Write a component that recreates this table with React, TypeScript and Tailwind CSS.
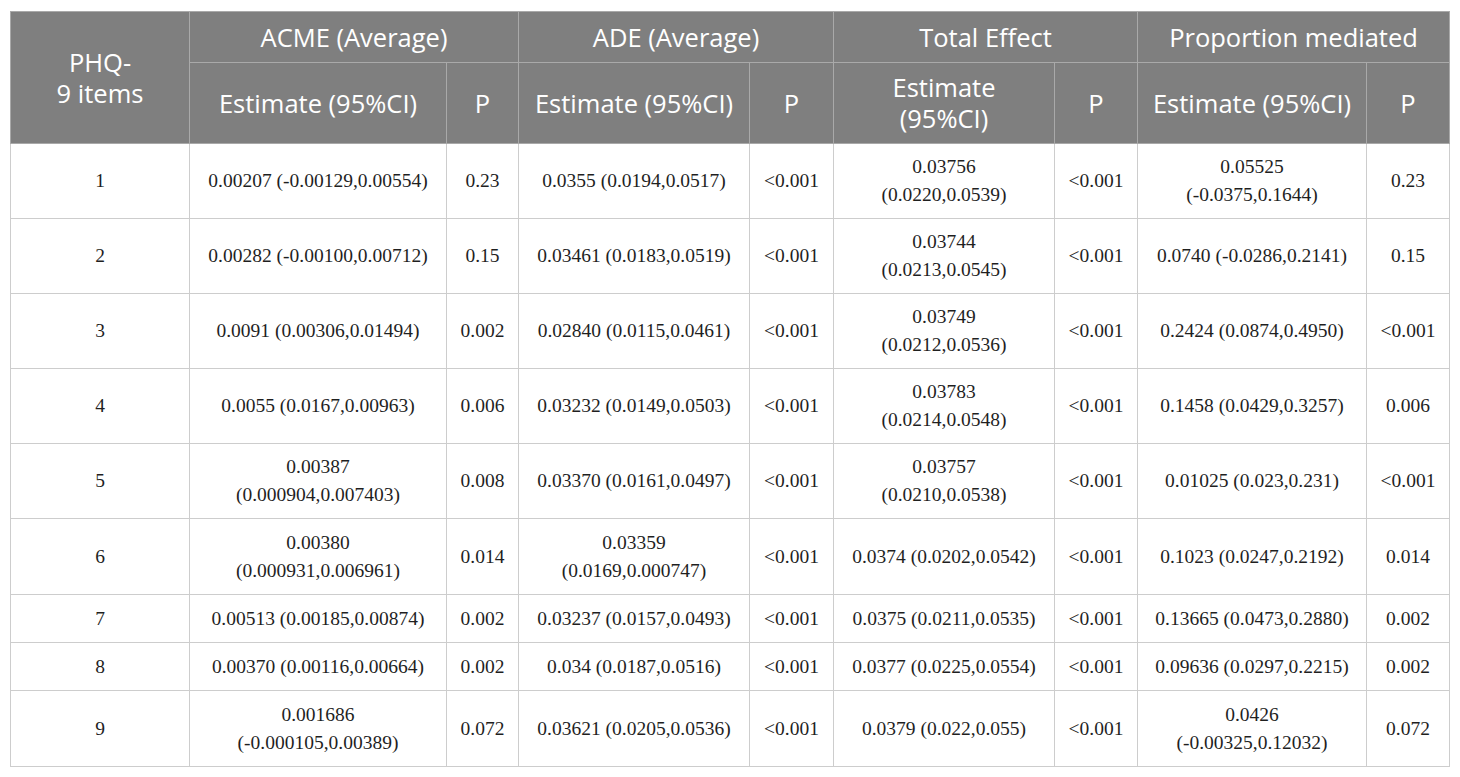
import React from "react";

type Row = { h: string; cells: string[] };

const rows: Row[] = [
  { h: "h-[75px]", cells: ["1", "0.00207 (-0.00129,0.00554)", "0.23", "0.0355 (0.0194,0.0517)", "<0.001", "0.03756|(0.0220,0.0539)", "<0.001", "0.05525|(-0.0375,0.1644)", "0.23"] },
  { h: "h-[75px]", cells: ["2", "0.00282 (-0.00100,0.00712)", "0.15", "0.03461 (0.0183,0.0519)", "<0.001", "0.03744|(0.0213,0.0545)", "<0.001", "0.0740 (-0.0286,0.2141)", "0.15"] },
  { h: "h-[75px]", cells: ["3", "0.0091 (0.00306,0.01494)", "0.002", "0.02840 (0.0115,0.0461)", "<0.001", "0.03749|(0.0212,0.0536)", "<0.001", "0.2424 (0.0874,0.4950)", "<0.001"] },
  { h: "h-[75px]", cells: ["4", "0.0055 (0.0167,0.00963)", "0.006", "0.03232 (0.0149,0.0503)", "<0.001", "0.03783|(0.0214,0.0548)", "<0.001", "0.1458 (0.0429,0.3257)", "0.006"] },
  { h: "h-[75px]", cells: ["5", "0.00387|(0.000904,0.007403)", "0.008", "0.03370 (0.0161,0.0497)", "<0.001", "0.03757|(0.0210,0.0538)", "<0.001", "0.01025 (0.023,0.231)", "<0.001"] },
  { h: "h-[76px]", cells: ["6", "0.00380|(0.000931,0.006961)", "0.014", "0.03359|(0.0169,0.000747)", "<0.001", "0.0374 (0.0202,0.0542)", "<0.001", "0.1023 (0.0247,0.2192)", "0.014"] },
  { h: "h-[48px]", cells: ["7", "0.00513 (0.00185,0.00874)", "0.002", "0.03237 (0.0157,0.0493)", "<0.001", "0.0375 (0.0211,0.0535)", "<0.001", "0.13665 (0.0473,0.2880)", "0.002"] },
  { h: "h-[48px]", cells: ["8", "0.00370 (0.00116,0.00664)", "0.002", "0.034 (0.0187,0.0516)", "<0.001", "0.0377 (0.0225,0.0554)", "<0.001", "0.09636 (0.0297,0.2215)", "0.002"] },
  { h: "h-[76px]", cells: ["9", "0.001686|(-0.000105,0.00389)", "0.072", "0.03621 (0.0205,0.0536)", "<0.001", "0.0379 (0.022,0.055)", "<0.001", "0.0426|(-0.00325,0.12032)", "0.072"] },
];

function Cell({ text }: { text: string }) {
  const parts = text.split("|");
  return (
    <td className="border border-[#cdcdcd] px-1 py-0 text-center align-middle">
      {parts.map((p, i) => (
        <React.Fragment key={i}>
          {i > 0 && <br />}
          {p}
        </React.Fragment>
      ))}
    </td>
  );
}

const th = "border border-[#a9a9a9] px-1 py-0 text-center align-middle font-normal";

export default function App() {
  return (
    <div className="min-h-[777px] w-[1460px] bg-white pl-[10px] pt-[11px]">
      <table className="w-[1439px] table-fixed border-collapse border border-[#cdcdcd] text-[19.5px] leading-[28px] text-[#1f1f1f]" style={{ fontFamily: '"Liberation Serif", "Times New Roman", serif' }}>
        <colgroup>
          <col className="w-[179px]" />
          <col className="w-[257px]" />
          <col className="w-[72px]" />
          <col className="w-[231px]" />
          <col className="w-[84px]" />
          <col className="w-[221px]" />
          <col className="w-[83px]" />
          <col className="w-[229px]" />
          <col className="w-[83px]" />
        </colgroup>
        <thead className="bg-[#7f7f7f] text-white text-[25.5px] leading-[31px] [font-family:'Open_Sans',sans-serif]">
          <tr className="h-[51px]">
            <th rowSpan={2} className={th}>
              PHQ-
              <br />9 items
            </th>
            <th colSpan={2} className={th}>ACME (Average)</th>
            <th colSpan={2} className={th}>ADE (Average)</th>
            <th colSpan={2} className={th}>Total Effect</th>
            <th colSpan={2} className={th}>Proportion mediated</th>
          </tr>
          <tr className="h-[81px]">
            <th className={th}>Estimate (95%CI)</th>
            <th className={th}>P</th>
            <th className={th}>Estimate (95%CI)</th>
            <th className={th}>P</th>
            <th className={th}>
              Estimate
              <br />
              (95%CI)
            </th>
            <th className={th}>P</th>
            <th className={th}>Estimate (95%CI)</th>
            <th className={th}>P</th>
          </tr>
        </thead>
        <tbody>
          {rows.map((r, i) => (
            <tr key={i} className={r.h}>
              {r.cells.map((c, j) => (
                <Cell key={j} text={c} />
              ))}
            </tr>
          ))}
        </tbody>
      </table>
    </div>
  );
}
